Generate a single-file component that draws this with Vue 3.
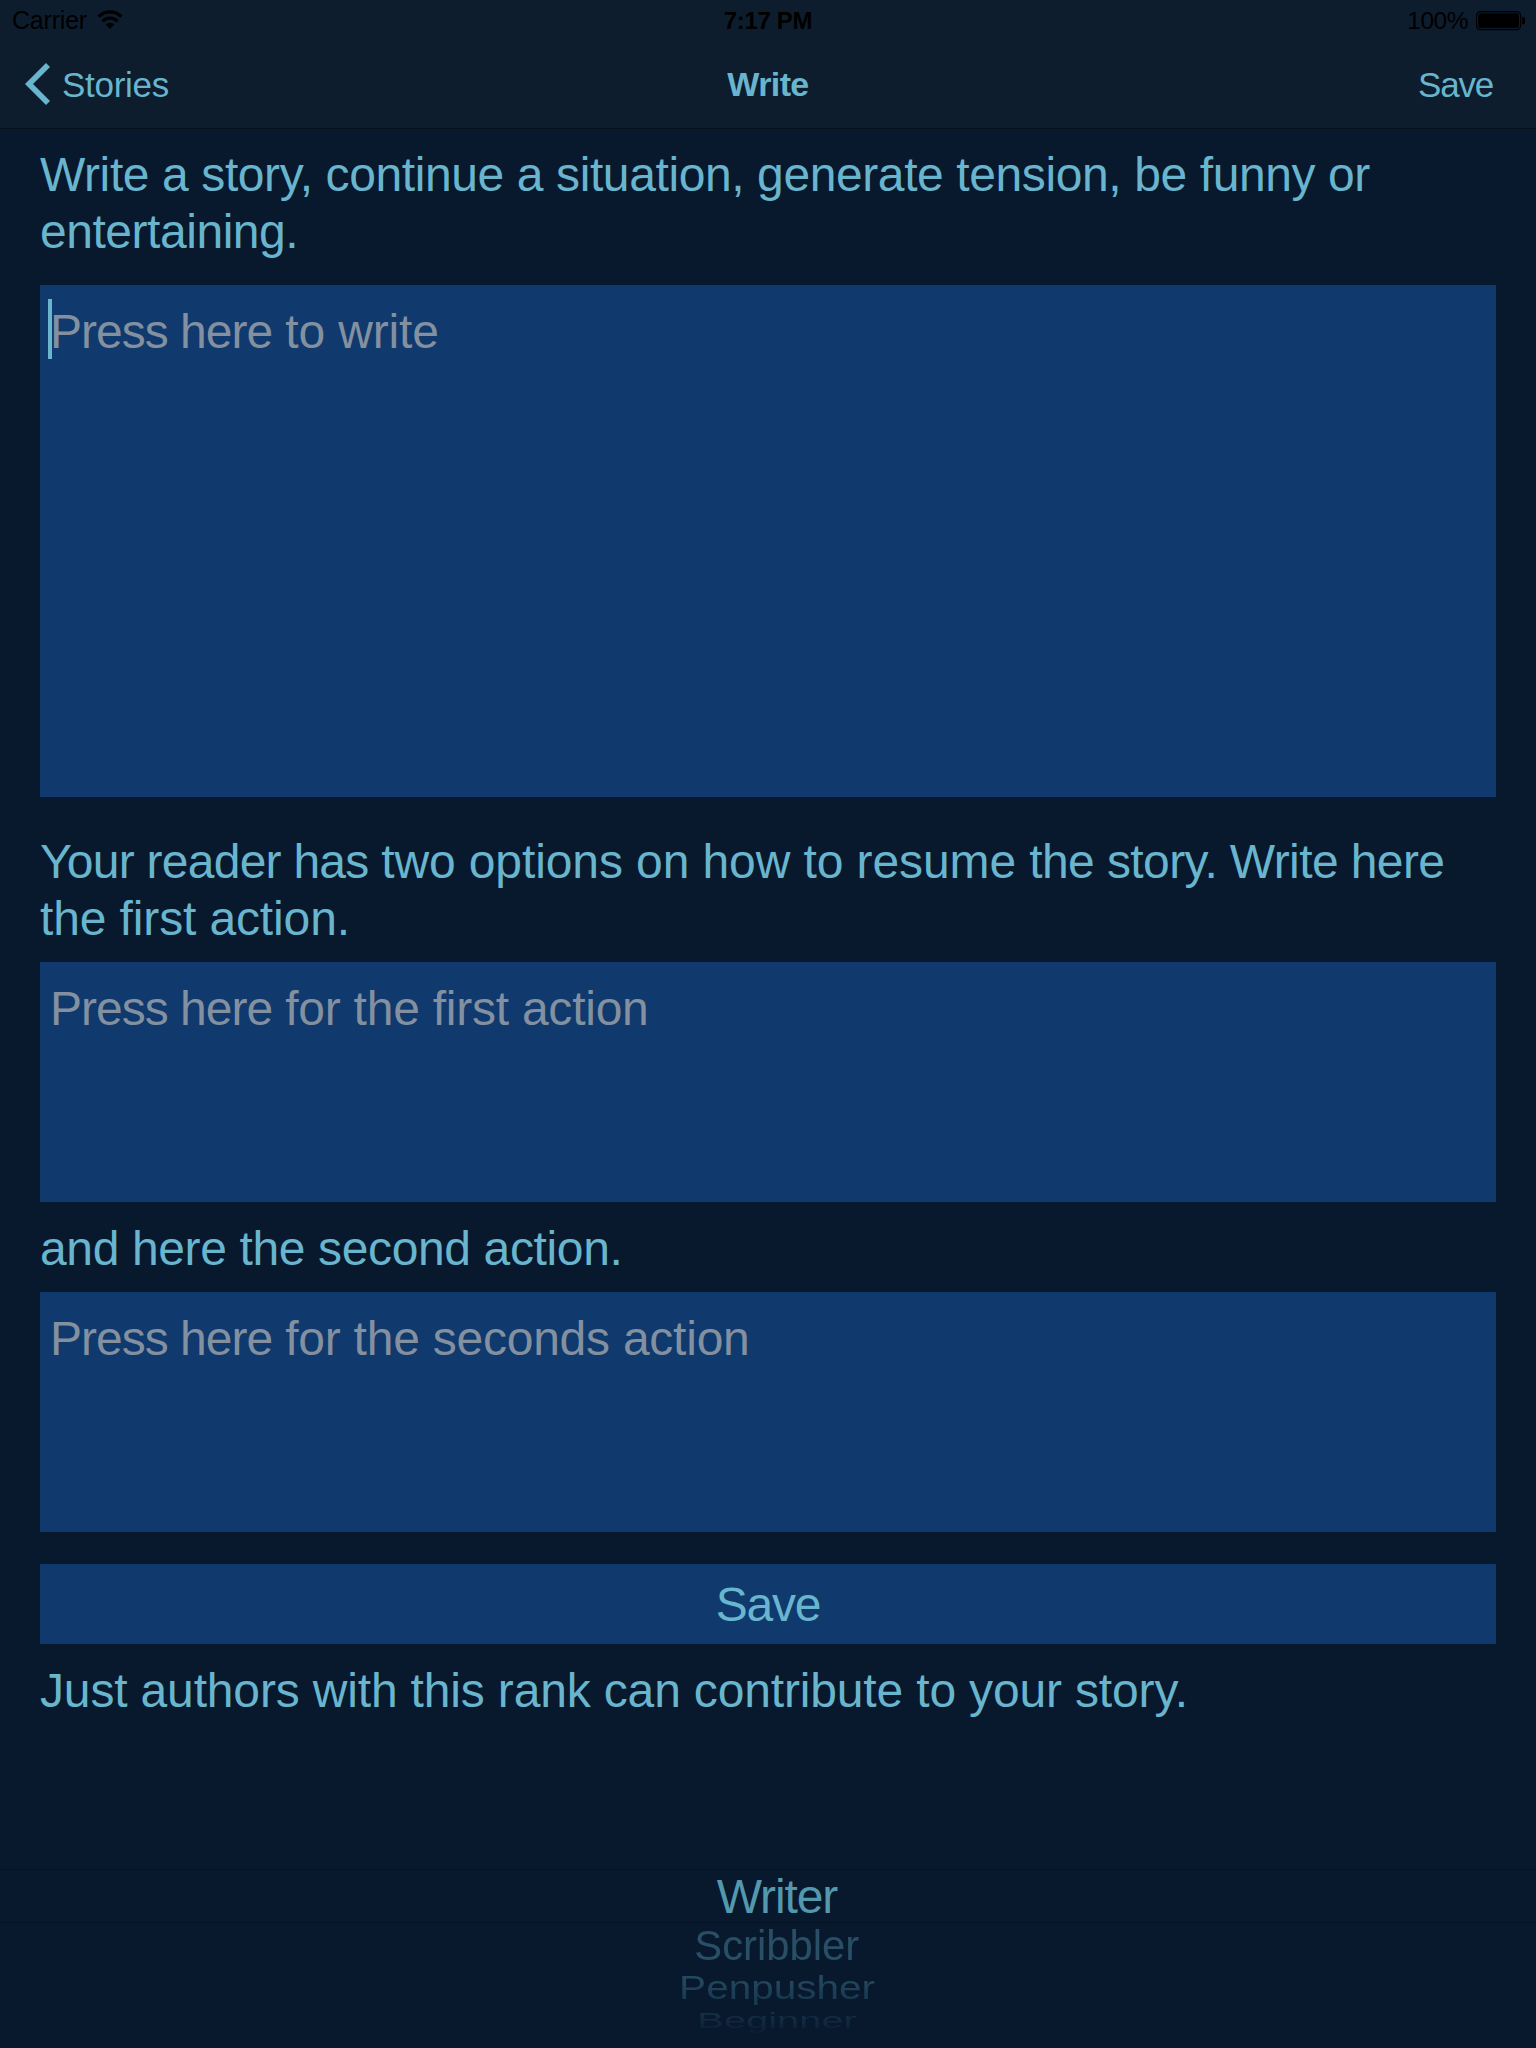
<script setup>
import { ref } from 'vue'

const ranks = ref([
  { name: 'Writer', level: 'selected' },
  { name: 'Scribbler', level: 'near' },
  { name: 'Penpusher', level: 'far' },
  { name: 'Beginner', level: 'edge' },
])
</script>

<template>
  <div class="screen">
    <header class="top">
      <div class="status">
        <div class="side">
          <span class="carrier">Carrier</span>
          <svg class="wifi" width="26" height="20" viewBox="0 0 26 20">
            <path d="M1.6 6.6 A16 16 0 0 1 24.4 6.6" fill="none" stroke="#000" stroke-width="3.4" />
            <path d="M5.4 11.4 A10.6 10.6 0 0 1 20.6 11.4" fill="none" stroke="#000" stroke-width="3.2" />
            <path d="M8.6 14.6 A6.2 6.2 0 0 1 17.4 14.6 L13 19 Z" fill="#000" />
          </svg>
        </div>
        <div class="clock">7:17 PM</div>
        <div class="side right">
          <span class="percent">100%</span>
          <svg class="battery" width="50" height="20" viewBox="0 0 50 20">
            <rect x="0.6" y="0.6" width="44" height="18" rx="3.6" fill="none" stroke="#000" stroke-width="1.2" />
            <rect x="2.2" y="2.2" width="40.8" height="14.8" rx="2" fill="#000" />
            <path d="M46.2 6 h0.8 a2 2 0 0 1 2 2 v3.4 a2 2 0 0 1 -2 2 h-0.8 z" fill="#000" />
          </svg>
        </div>
      </div>
      <nav class="nav">
        <a class="back">
          <svg width="26" height="44" viewBox="0 0 26 44">
            <path d="M0 22 L21 1 L25 5 L8 22 L25 39 L21 43 Z" fill="#68b5cd" />
          </svg>
          <span>Stories</span>
        </a>
        <h1 class="title">Write</h1>
        <a class="save-link">Save</a>
      </nav>
    </header>

    <main class="form">
      <p class="label intro">
        <span class="l1">Write a story, continue a situation, generate tension, be funny or</span><br />
        <span class="l2">entertaining.</span>
      </p>
      <div class="field story"><i class="caret"></i><span class="lead">Press here</span><span class="f1"> to write</span></div>
      <p class="label options">
        <span class="l3a">Your reader has </span><span class="l3b">two options on how to resume </span><span class="l3c">the story. Write here</span><br />
        <span class="l4">the first action.</span>
      </p>
      <div class="field action"><span class="lead">Press here</span><span class="f2"> for the first action</span></div>
      <p class="label second"><span class="l5">and here the second action.</span></p>
      <div class="field action"><span class="lead">Press here</span><span class="f2"> for the seconds action</span></div>
      <button class="save">Save</button>
      <p class="label rank"><span class="l6">Just authors with this rank can contribute to your story.</span></p>
    </main>

    <div class="picker">
      <div v-for="r in ranks" :key="r.name" class="row" :class="r.level">
        <span>{{ r.name }}</span>
      </div>
    </div>
  </div>
</template>

<style>
body { background: #08192e; }
</style>

<style scoped>
.screen {
  width: 1536px;
  height: 2048px;
  overflow: hidden;
  display: flex;
  flex-direction: column;
  background: #08192e;
  color: #68b5cd;
  font-family: "Liberation Sans", Arial, sans-serif;
  font-size: 48px;
}
.top {
  flex: none;
  height: 128px;
  background: #0e1d2e;
  border-bottom: 1px solid #061120;
}
.status {
  display: grid;
  grid-template-columns: 1fr auto 1fr;
  height: 41px;
  line-height: 41px;
  color: #000;
  font-size: 24px;
}
.side { display: flex; align-items: flex-start; padding-left: 12px; }
.right { justify-content: flex-end; padding: 0 10px 0 0; }
.carrier { font-size: 25px; letter-spacing: -0.2px; }
.wifi { margin: 10px 0 0 10px; }
.clock { font-weight: 700; letter-spacing: -0.35px; }
.percent { letter-spacing: -0.5px; font-size: 24.5px; }
.battery { margin: 11px 0 0 8px; }
.nav {
  display: grid;
  grid-template-columns: 1fr auto 1fr;
  height: 87px;
  line-height: 87px;
  font-size: 35px;
}
.back { display: flex; padding-left: 25px; letter-spacing: -0.3px; }
.back svg { margin: 21px 11px 0 0; }
.title { margin: 0; font-size: 34px; font-weight: 700; letter-spacing: -0.6px; }
.save-link { text-align: right; padding-right: 43px; letter-spacing: -1.2px; }
.form { display: flex; flex-direction: column; flex: none; padding: 17px 40px 0; }
.label { margin: 0; line-height: 57px; white-space: nowrap; }
.intro { margin-bottom: 25px; }
.options { margin: 36px 0 15px; }
.second { margin: 18px 0 15px; }
.rank { margin-top: 18px; }
.field {
  position: relative;
  box-sizing: border-box;
  padding: 18px 10px 0;
  background: #10396d;
  color: #8390a0;
  line-height: 57px;
  white-space: pre;
}
.story { height: 512px; }
.action { height: 240px; }
.caret {
  position: absolute;
  left: 8px;
  top: 14px;
  width: 4px;
  height: 60px;
  background: #68b5cd;
}
.save {
  height: 80px;
  margin-top: 32px;
  padding: 1px 0 0;
  border: 0;
  background: #10396d;
  color: inherit;
  font: inherit;
  line-height: 79px;
  letter-spacing: -1.2px;
}
.l1 { letter-spacing: -0.4px; }
.l2 { letter-spacing: -0.46px; }
.l3a { letter-spacing: -0.75px; }
.l3b { letter-spacing: -0.1px; }
.l3c { letter-spacing: -0.6px; }
.l4 { letter-spacing: -0.13px; }
.l5 { letter-spacing: -0.37px; }
.l6 { letter-spacing: -0.16px; }
.lead { letter-spacing: -1px; }
.f1 { letter-spacing: -0.15px; }
.f2 { letter-spacing: -0.24px; }
.picker { margin-top: auto; height: 179px; flex: none; text-align: center; }
.row { display: flex; justify-content: center; align-items: center; padding-left: 18px; }
.row span { line-height: 1; transform-origin: center; }
.selected {
  box-sizing: border-box;
  height: 54px;
  padding-top: 2px;
  border-top: 1px solid #051225;
  border-bottom: 1px solid #051225;
  color: #5498ae;
  letter-spacing: -1.1px;
}
.near { box-sizing: border-box; height: 44px; padding-top: 2px; color: #284f65; }
.near span { transform: scale(0.87, 0.88); }
.far { box-sizing: border-box; height: 40px; padding-top: 2px; }
.far span {
  transform: scale(0.844, 0.71);
  background: linear-gradient(#24495f 20%, #183850 90%);
  background-clip: text;
  color: transparent;
}
.edge { height: 23px; }
.edge span {
  transform: scale(0.83, 0.47);
  padding-bottom: 6px;
  margin-bottom: -6px;
  background: linear-gradient(#142f46 20%, #0a1d33 95%);
  background-clip: text;
  color: transparent;
}
</style>
